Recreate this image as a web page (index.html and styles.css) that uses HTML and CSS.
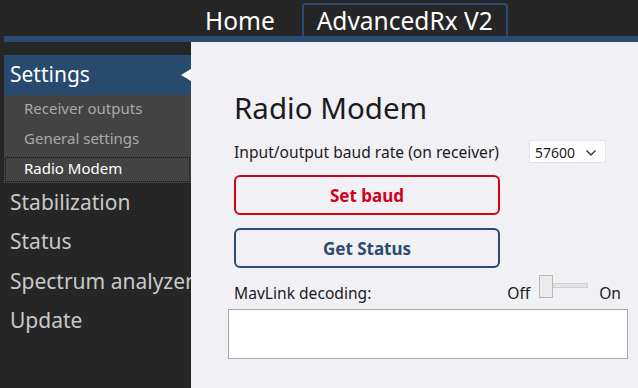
FILE: index.html
```html
<!DOCTYPE html>
<html lang="en">
<head>
  <meta charset="utf-8">
  <title>AdvancedRx V2 - Radio Modem</title>
  <link rel="stylesheet" href="styles.css">
</head>
<body>
  <div class="tabs">
    <div class="tab">Home</div>
    <div class="tab active">AdvancedRx V2</div>
  </div>
  <div class="tabbar"></div>
  <div class="main">
    <div class="sidebar">
      <div class="group open">
        <div class="group-title">Settings<span class="arrow"></span></div>
        <ul class="sub">
          <li>Receiver outputs</li>
          <li>General settings</li>
          <li class="selected">Radio Modem</li>
        </ul>
      </div>
      <div class="group-title">Stabilization</div>
      <div class="group-title">Status</div>
      <div class="group-title">Spectrum analyzer</div>
      <div class="group-title">Update</div>
    </div>
    <div class="panel">
      <h1>Radio Modem</h1>
      <div class="row">
        <span>Input/output baud rate (on receiver)</span>
        <div class="select">57600
          <svg width="12" height="8" viewBox="0 0 12 8"><path d="M1.5 1.5 L6 6 L10.5 1.5" fill="none" stroke="#333" stroke-width="1.4"/></svg>
        </div>
      </div>
      <button class="btn btn-red">Set baud</button>
      <button class="btn btn-blue">Get Status</button>
      <div class="row mav">
        <span>MavLink decoding:</span>
        <div class="toggle">
          <span>Off</span>
          <div class="slider"><div class="thumb"></div><div class="track"></div></div>
          <span>On</span>
        </div>
      </div>
      <div class="log"></div>
    </div>
  </div>
</body>
</html>
```

FILE: styles.css
```css
html, body {
  margin: 0;
  height: 100%;
}
body {
  background: #262626;
  font-family: "Noto Sans", "Open Sans", sans-serif;
  color: #1b1b1b;
  display: flex;
  flex-direction: column;
  overflow: hidden;
}
.tabs {
  display: flex;
  height: 36px;
  padding-left: 188px;
  align-items: flex-end;
}
.tab {
  color: #fff;
  font-size: 24.5px;
  line-height: 31px;
  height: 33px;
  padding: 0 15px;
  box-sizing: border-box;
  border: 2px solid transparent;
  border-bottom: 0;
  white-space: nowrap;
}
.tab.active {
  border-color: #2b4b70;
  border-radius: 4px 4px 0 0;
  margin-left: 10px;
  padding: 0 13px;
}
.tabbar {
  height: 6px;
  margin-left: 4px;
  background: #2b4b70;
}
.main {
  flex: 1;
  display: flex;
  padding-left: 4px;
}
.sidebar {
  width: 187px;
  padding-top: 13px;
  overflow: hidden;
  white-space: nowrap;
}
.group-title {
  position: relative;
  font-size: 21px;
  line-height: 39.5px;
  padding-left: 6px;
  color: #c9c9c9;
}
.open .group-title {
  background: #284a6e;
  color: #fff;
}
.arrow {
  position: absolute;
  right: 0;
  top: 14px;
  border: 6px solid transparent;
  border-right: 10px solid #fff;
  border-left: 0;
}
.sub {
  list-style: none;
  margin: 0;
  padding: 0 0 1px;
  background: #434343;
}
.sub li {
  font-size: 15px;
  line-height: 25px;
  padding: 0 0 3px 19px;
  color: #a9a9a9;
  border: 1px dotted transparent;
}
.sub li.selected {
  color: #fff;
  border-color: #111;
  line-height: 21px;
  margin: 2px 1px 0;
  padding: 0 0 2px 18px;
}
.panel {
  flex: 1;
  background: #f1f0f5;
  padding: 47px 9px 0 43px;
}
h1 {
  font-size: 29.5px;
  font-weight: normal;
  margin: 0 0 13px;
  line-height: 38px;
}
.row {
  display: flex;
  justify-content: space-between;
  align-items: center;
  font-size: 15.6px;
  width: 372px;
}
.select {
  width: 77px;
  height: 23px;
  box-sizing: border-box;
  background: #fff;
  border: 1px solid #e4e3e8;
  font-size: 14px;
  display: flex;
  align-items: center;
  justify-content: space-between;
  padding: 2px 8px 0 5px;
}
.btn {
  display: block;
  width: 266px;
  height: 40px;
  margin-top: 12px;
  background: transparent;
  border: 2px solid;
  border-radius: 6px;
  font-family: inherit;
  font-size: 17px;
  font-weight: bold;
}
.btn-red {
  color: #d0021b;
  border-color: #d0021b;
}
.btn-blue {
  margin-top: 13px;
  color: #2b4b70;
  border-color: #2b4b70;
}
.mav {
  width: 387px;
  margin-top: 7px;
  align-items: flex-end;
}
.toggle {
  display: flex;
  align-items: flex-end;
}
.slider {
  position: relative;
  width: 48px;
  height: 23px;
  margin: 0 12px 6px 9px;
}
.thumb {
  position: absolute;
  left: 0;
  top: 0;
  width: 12px;
  height: 21px;
  background: #eaeaea;
  border: 1px solid #b8b8b8;
}
.track {
  position: absolute;
  left: 14px;
  top: 8px;
  width: 33px;
  height: 3px;
  background: #e4e4e4;
  border: 1px solid #d2d2d2;
}
.log {
  margin: 5px 0 0 -6px;
  width: 398px;
  height: 48px;
  background: #fff;
  border: 1px solid #a8a8a8;
}
```
